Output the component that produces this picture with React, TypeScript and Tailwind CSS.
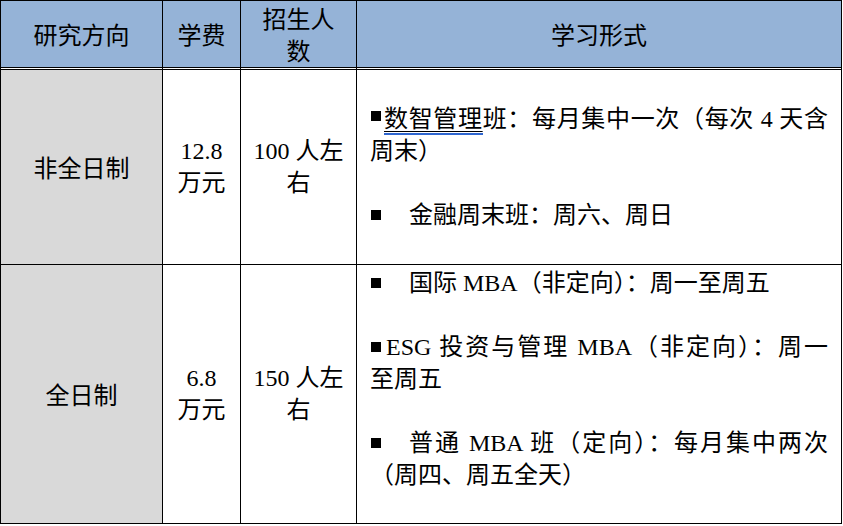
import React from "react";

const sans = "font-['Noto_Sans_CJK_SC',sans-serif]";
const serif = "font-['Liberation_Serif','Noto_Sans_CJK_SC',serif]";

function Bullet() {
  return <span className="inline-block w-[10px] h-[10px] bg-black shrink-0" />;
}

export default function App() {
  const head =
    "bg-[#95b3d7] bg-clip-padding border-r border-b-[3px] border-double border-black flex items-center justify-center text-center text-black text-[24px] leading-[32px] " +
    sans;
  const cell = "border-r border-b border-black text-black text-[24px] leading-[32px]";
  const justifyLine = "flex-1 whitespace-nowrap text-justify [text-align-last:justify]";

  return (
    <div className="w-[843px] h-[526px] bg-white">
      <div className="w-[842px] border-l border-t border-black grid grid-cols-[162px_78px_116px_485px] grid-rows-[69px_195px_259px]">
        {/* header */}
        <div className={head}>研究方向</div>
        <div className={head}>学费</div>
        <div className={head + " flex-col"}>
          <div>招生人</div>
          <div>数</div>
        </div>
        <div className={head}>学习形式</div>

        {/* row 1 */}
        <div className={cell + " bg-[#d9d9d9] bg-clip-padding flex items-center justify-center " + sans}>
          非全日制
        </div>
        <div className={cell + " flex flex-col items-center justify-center " + serif}>
          <div>12.8</div>
          <div>万元</div>
        </div>
        <div className={cell + " flex flex-col items-center justify-center " + serif}>
          <div>100 人左</div>
          <div>右</div>
        </div>
        <div className={cell + " flex flex-col justify-center pl-[13px] pr-[13px] " + serif}>
          <div className="flex items-center h-[32px]">
            <span className="ml-[1px] mr-[3px] -translate-y-[3px] inline-flex">
              <Bullet />
            </span>
            <div className={justifyLine}>
              <span className="relative">
                <span className="underline decoration-black decoration-1 underline-offset-[4px]">数智管理</span>
                <span className="absolute left-0 right-0 bottom-[-3px] h-[2px] bg-[#2f66d0]" />
              </span>
              班：每月集中一次（每次 4 天含
            </div>
          </div>
          <div className="whitespace-nowrap">周末）</div>
          <div className="h-[32px]" />
          <div className="flex items-center h-[32px]">
            <span className="ml-[1px] mr-[28px] inline-flex">
              <Bullet />
            </span>
            <div className="whitespace-nowrap">金融周末班：周六、周日</div>
          </div>
        </div>

        {/* row 2 */}
        <div className={cell + " bg-[#d9d9d9] bg-clip-padding flex items-center justify-center " + sans}>
          全日制
        </div>
        <div className={cell + " flex flex-col items-center justify-center " + serif}>
          <div>6.8</div>
          <div>万元</div>
        </div>
        <div className={cell + " flex flex-col items-center justify-center " + serif}>
          <div>150 人左</div>
          <div>右</div>
        </div>
        <div className={cell + " flex flex-col pt-[2px] pl-[13px] pr-[13px] " + serif}>
          <div className="flex items-center h-[32px]">
            <span className="ml-[1px] mr-[28px] inline-flex">
              <Bullet />
            </span>
            <div className="whitespace-nowrap">国际 MBA（非定向）：周一至周五</div>
          </div>
          <div className="h-[32px]" />
          <div className="flex items-center h-[32px]">
            <span className="ml-[1px] mr-[5px] inline-flex">
              <Bullet />
            </span>
            <div className={justifyLine}>ESG 投资与管理 MBA（非定向）：周一</div>
          </div>
          <div className="whitespace-nowrap">至周五</div>
          <div className="h-[32px]" />
          <div className="flex items-center h-[32px]">
            <span className="ml-[1px] mr-[28px] inline-flex">
              <Bullet />
            </span>
            <div className={justifyLine}>普通 MBA 班（定向）：每月集中两次</div>
          </div>
          <div className="whitespace-nowrap">（周四、周五全天）</div>
        </div>
      </div>
    </div>
  );
}
